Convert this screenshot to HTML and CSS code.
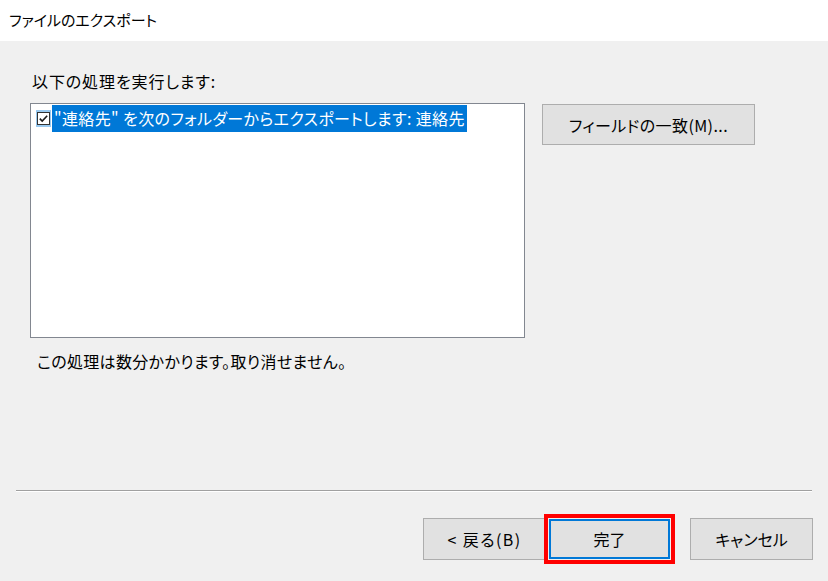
FILE: index.html
```html
<!DOCTYPE html>
<html lang="ja">
<head>
<meta charset="utf-8">
<title>ファイルのエクスポート</title>
<link rel="stylesheet" href="styles.css">
</head>
<body>
<div class="dialog">
  <div class="titlebar">ファイルのエクスポート</div>
  <div class="content">
    <div class="label">以下の処理を実行します:</div>
    <div class="main-row">
      <div class="listbox">
        <div class="item">
          <span class="check">
            <svg width="13" height="13" viewBox="0 0 13 13">
              <rect x="0.5" y="0.5" width="12" height="12" fill="#fff" stroke="#333"/>
              <path d="M2.8 6.6 L5.2 9 L10.2 3.8" fill="none" stroke="#1a1a1a" stroke-width="1.6"/>
            </svg>
          </span>
          <span class="item-text">"連絡先" を次のフォルダーからエクスポートします: 連絡先</span>
        </div>
      </div>
      <button class="btn btn-map">フィールドの一致(M)...</button>
    </div>
    <div class="note">この処理は数分かかります。取り消せません。</div>
  </div>
  <div class="separator"></div>
  <div class="footer">
    <button class="btn btn-back">&lt; 戻る(B)</button>
    <button class="btn btn-finish">完了</button>
    <button class="btn btn-cancel">キャンセル</button>
  </div>
</div>
</body>
</html>
```

FILE: styles.css
```css
html, body {
  margin: 0;
  padding: 0;
}
body {
  width: 828px;
  height: 581px;
  background: #f0f0f0;
  font-family: "Noto Sans CJK JP", "Noto Sans", sans-serif;
  font-size: 16px;
  color: #000;
  font-feature-settings: "palt";
  overflow: hidden;
}
.dialog {
  display: flex;
  flex-direction: column;
  height: 581px;
}
.titlebar {
  height: 41px;
  line-height: 40px;
  background: #fff;
  padding-left: 9px;
  box-sizing: border-box;
  font-size: 15px;
}
.content {
  padding: 0 0 0 30px;
  height: 448px;
  box-sizing: border-box;
}
.label {
  margin-top: 28px;
  margin-left: 2px;
  height: 24px;
  line-height: 24px;
  letter-spacing: 0.9px;
}
.main-row {
  display: flex;
  align-items: flex-start;
  margin-top: 10px;
}
.listbox {
  width: 495px;
  height: 235px;
  box-sizing: border-box;
  border: 1px solid #828790;
  background: #fff;
  padding: 1px 0 0 5px;
}
.item {
  display: flex;
  align-items: center;
  height: 27px;
}
.check {
  display: flex;
  align-items: center;
  justify-content: center;
  width: 15px;
  height: 17px;
  background: #99c9ef;
  margin-right: 1px;
}
.item-text {
  background: #0078d7;
  color: #fff;
  height: 27px;
  line-height: 27px;
  padding: 0 2px 0 2px;
  letter-spacing: 0.38px;
}
.btn {
  font-family: inherit;
  font-size: 16px;
  font-feature-settings: "palt";
  color: #000;
  background: #e1e1e1;
  border: 1px solid #adadad;
  border-radius: 0;
  padding: 0;
  margin: 0;
  box-sizing: border-box;
}
.btn-map {
  width: 213px;
  height: 41px;
  margin-left: 17px;
  margin-top: 1px;
  letter-spacing: 0.4px;
}
.note {
  margin-top: 11px;
  margin-left: 7px;
  line-height: 24px;
  letter-spacing: 0.33px;
}
.separator {
  margin: 1px 16px 0 16px;
  height: 1px;
  background: #a0a0a0;
  border-bottom: 1px solid #fff;
}
.footer {
  display: flex;
  justify-content: flex-end;
  padding: 26px 15px 0 0;
}
.footer .btn {
  width: 123px;
  height: 42px;
}
.btn-back {
  margin-right: 2px;
  letter-spacing: 1.4px;
}
.btn.btn-finish {
  border: 1px solid #f0f0f0;
  box-shadow: inset 0 0 0 2px #0078d7;
  outline: 4px solid #ff0000;
  outline-offset: 0;
  margin-right: 19px;
}
```
